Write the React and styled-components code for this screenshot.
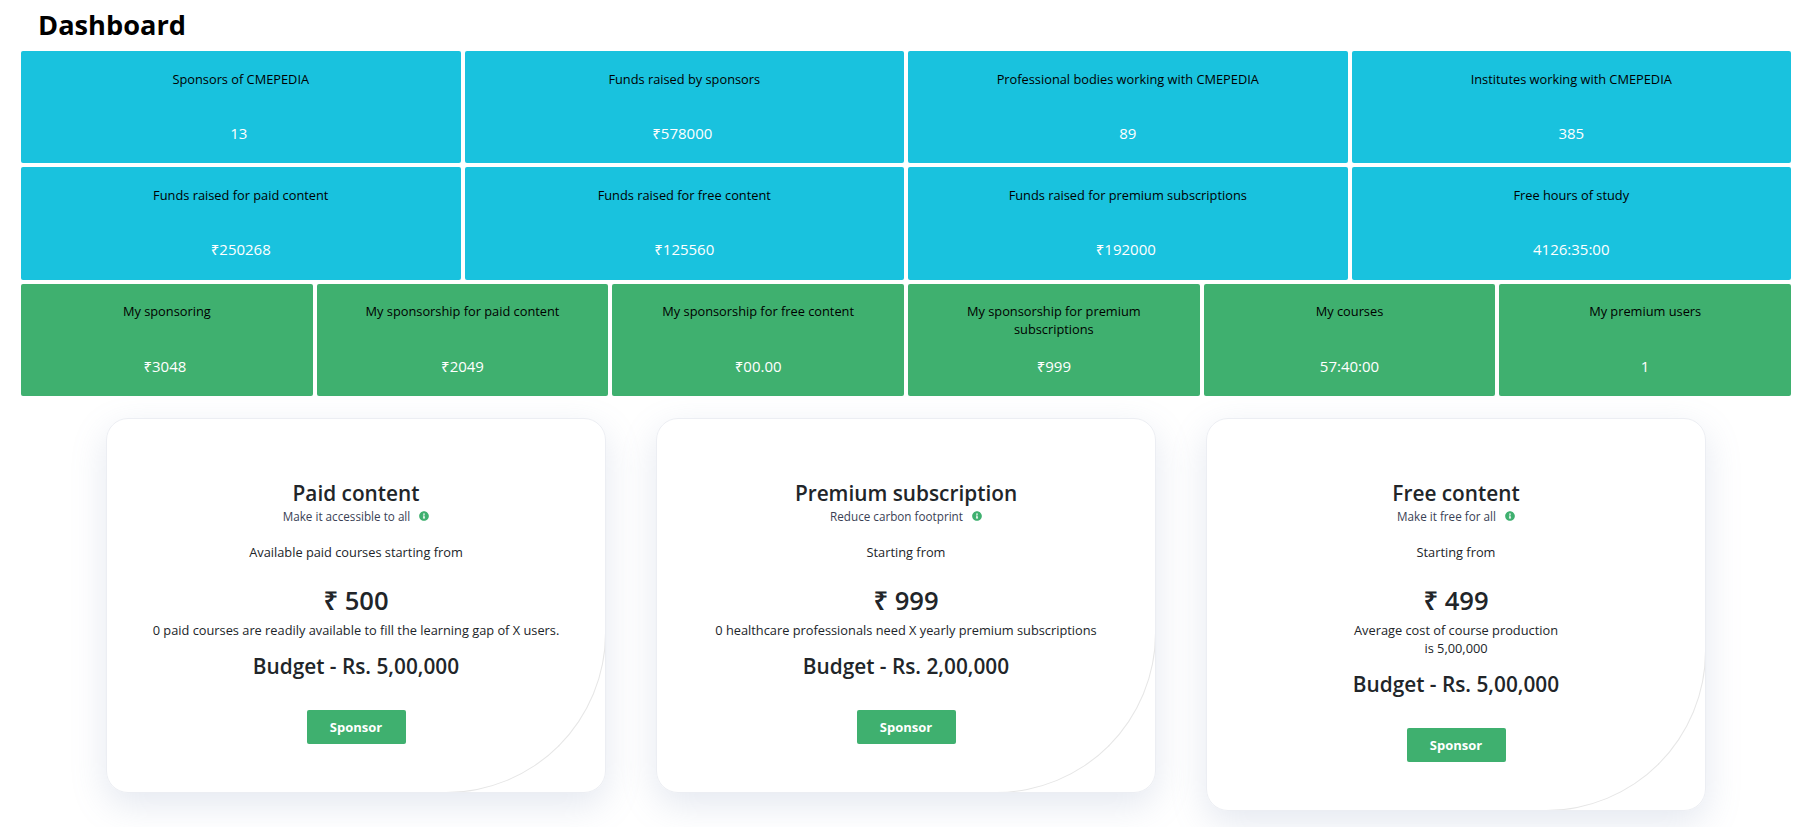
import React from 'react';
import styled, { createGlobalStyle } from 'styled-components';
import { FaInfoCircle } from 'react-icons/fa';

const GlobalStyle = createGlobalStyle`
  body {
    margin: 0;
    padding: 0;
    background: #fff;
    font-family: "Open Sans", "Noto Sans", sans-serif;
  }
  * {
    box-sizing: border-box;
  }
`;

const Page = styled.div`
  height: 100vh;
  padding: 0 22px 0 21px;
  overflow: hidden;
`;

const Title = styled.h1`
  margin: 0;
  padding-left: 17px;
  height: 51px;
  font-size: 27.2px;
  line-height: 50px;
  font-weight: 700;
  color: #000;
`;

const StatGrid = styled.div`
  display: grid;
  grid-template-columns: repeat(${(p) => p.$cols}, 1fr);
  gap: 4px;
  margin-bottom: 4px;
`;

const StatCell = styled.div`
  height: 112.3px;
  padding: 18.5px 24px 0;
  border-radius: 2px;
  text-align: center;
  background: ${(p) => (p.$green ? '#3fb06f' : '#19c2de')};
`;

const StatLabel = styled.div`
  min-height: 36px;
  font-size: 12.8px;
  line-height: 18px;
  color: #000;
`;

const StatValue = styled.div`
  margin-top: 17.7px;
  font-size: 15px;
  line-height: 20px;
  color: #fff;
  white-space: pre;
`;

const CardRow = styled.div`
  display: flex;
  align-items: flex-start;
  justify-content: center;
  gap: 49.5px;
  margin-top: 22px;
`;

const CardShadow = styled.div`
  flex: 0 0 500.5px;
  border-radius: 22px;
  box-shadow: 0 12px 36px rgba(120, 140, 180, 0.2);
`;

const Card = styled.div`
  position: relative;
  padding: 59px 20px 48px;
  border: 1px solid #eceef3;
  border-radius: 22px;
  background: #fff;
  text-align: center;
  overflow: hidden;
`;

const CardArc = styled.div`
  position: absolute;
  right: -1px;
  bottom: -1px;
  width: 160px;
  height: 160px;
  border-right: 1px solid #e6e6e6;
  border-bottom: 1px solid #e6e6e6;
  border-bottom-right-radius: 160px;
  pointer-events: none;
`;

const CardTitle = styled.h2`
  margin: 0;
  font-size: 20.8px;
  line-height: 30px;
  font-weight: 600;
  color: #212529;
`;

const CardTagline = styled.div`
  display: flex;
  align-items: center;
  justify-content: center;
  gap: 9px;
  font-size: 11.7px;
  line-height: 16px;
  color: #3a3f55;
`;

const InfoIcon = styled(FaInfoCircle)`
  width: 10px;
  height: 10px;
  color: #3fb06f;
`;

const CardNote = styled.div`
  margin-top: 19px;
  font-size: 12.8px;
  line-height: 18px;
  color: #212529;
`;

const Price = styled.div`
  margin-top: 22px;
  font-size: 25.6px;
  line-height: 36px;
  font-weight: 600;
  color: #212529;
`;

const Description = styled.div`
  margin: 2px auto 0;
  max-width: ${(p) => p.$width || 'none'};
  font-size: 12.8px;
  line-height: 18px;
  color: #212529;
`;

const Budget = styled.div`
  margin-top: 12px;
  font-size: 20.8px;
  line-height: 30px;
  font-weight: 600;
  color: #212529;
`;

const SponsorButton = styled.button`
  display: block;
  width: 99px;
  height: 34px;
  margin: 29px auto 0;
  padding: 0;
  border: 0;
  border-radius: 2px;
  background: #3fb06f;
  color: #fff;
  font-family: inherit;
  font-size: 13px;
  font-weight: 700;
`;

const topStats = [
  { label: 'Sponsors of CMEPEDIA', value: '13\u00a0' },
  { label: 'Funds raised by sponsors', value: '₹578000\u00a0' },
  { label: 'Professional bodies working with CMEPEDIA', value: '89' },
  { label: 'Institutes working with CMEPEDIA', value: '385' },
  { label: 'Funds raised for paid content', value: '₹250268' },
  { label: 'Funds raised for free content', value: '₹125560' },
  { label: 'Funds raised for premium subscriptions', value: '₹192000\u00a0' },
  { label: 'Free hours of study', value: '4126:35:00' },
];

const myStats = [
  { label: 'My sponsoring', value: '₹3048\u00a0' },
  { label: 'My sponsorship for paid content', value: '₹2049' },
  { label: 'My sponsorship for free content', value: '₹00.00' },
  { label: 'My sponsorship for premium subscriptions', value: '₹999' },
  { label: 'My courses', value: '57:40:00' },
  { label: 'My premium users', value: '1' },
];

const cards = [
  {
    title: 'Paid content',
    tagline: 'Make it accessible to all',
    note: 'Available paid courses starting from',
    price: '₹ 500',
    description: '0 paid courses are readily available to fill the learning gap of X users.',
    budget: 'Budget - Rs. 5,00,000',
  },
  {
    title: 'Premium subscription',
    tagline: 'Reduce carbon footprint',
    note: 'Starting from',
    price: '₹ 999',
    description: '0 healthcare professionals need X yearly premium subscriptions',
    budget: 'Budget - Rs. 2,00,000',
  },
  {
    title: 'Free content',
    tagline: 'Make it free for all',
    note: 'Starting from',
    price: '₹ 499',
    description: 'Average cost of course production is 5,00,000',
    descWidth: '212px',
    budget: 'Budget - Rs. 5,00,000',
  },
];

export default function App() {
  return (
    <Page>
      <GlobalStyle />
      <Title>Dashboard</Title>
      <StatGrid $cols={4}>
        {topStats.map((s) => (
          <StatCell key={s.label}>
            <StatLabel>{s.label}</StatLabel>
            <StatValue>{s.value}</StatValue>
          </StatCell>
        ))}
      </StatGrid>
      <StatGrid $cols={6}>
        {myStats.map((s) => (
          <StatCell key={s.label} $green>
            <StatLabel>{s.label}</StatLabel>
            <StatValue>{s.value}</StatValue>
          </StatCell>
        ))}
      </StatGrid>
      <CardRow>
        {cards.map((c) => (
          <CardShadow key={c.title}>
            <Card>
              <CardArc />
              <CardTitle>{c.title}</CardTitle>
              <CardTagline>
                {c.tagline}
                <InfoIcon />
              </CardTagline>
              <CardNote>{c.note}</CardNote>
              <Price>{c.price}</Price>
              <Description $width={c.descWidth}>{c.description}</Description>
              <Budget>{c.budget}</Budget>
              <SponsorButton>Sponsor</SponsorButton>
            </Card>
          </CardShadow>
        ))}
      </CardRow>
    </Page>
  );
}
